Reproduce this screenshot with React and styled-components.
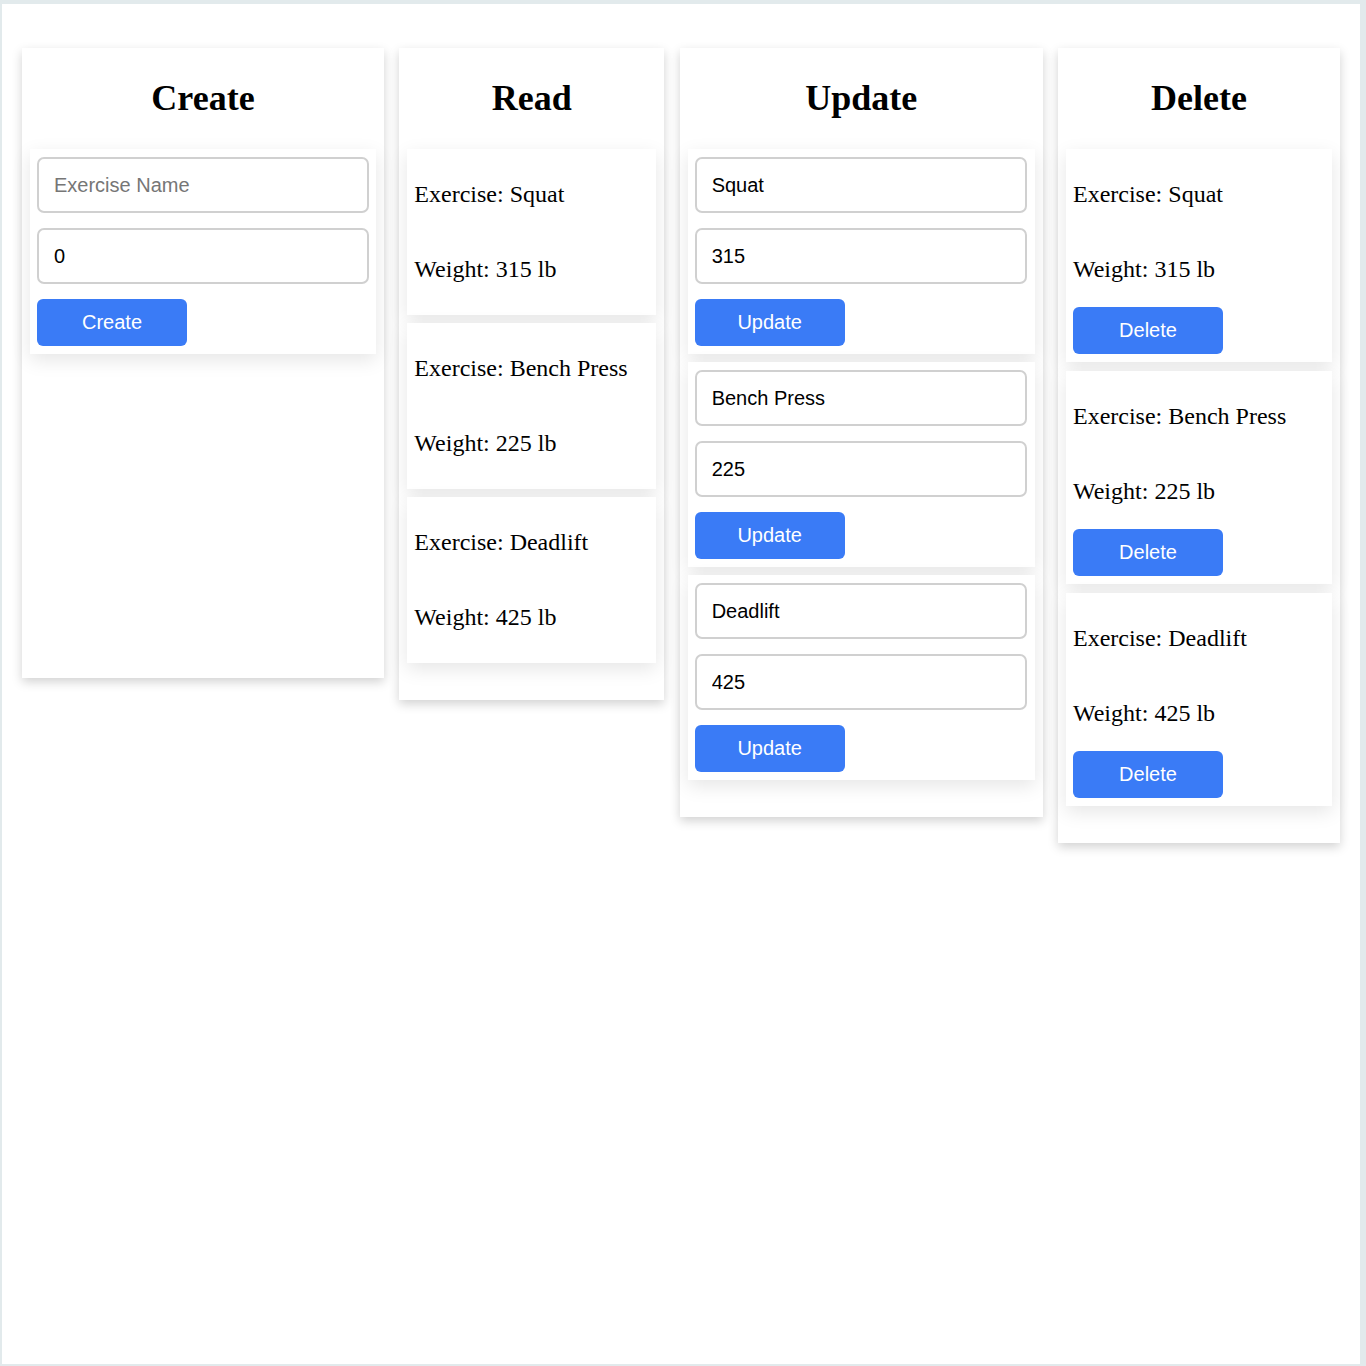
import React, { useState } from 'react';
import styled, { createGlobalStyle } from 'styled-components';

const GlobalStyle = createGlobalStyle`
    html, body {
        margin: 0;
        padding: 0;
        background: #e2eaec;
    }
    * { box-sizing: border-box; }
`

const initialExercises = [
    { id: 1, name: 'Squat', weight: 315 },
    { id: 2, name: 'Bench Press', weight: 225 },
    { id: 3, name: 'Deadlift', weight: 425 },
]

const App = () => {
    const [exercises, setExercises] = useState(initialExercises)
    const [newName, setNewName] = useState('')
    const [newWeight, setNewWeight] = useState(0)
    const [drafts, setDrafts] = useState(initialExercises)

    const create = () => {
        if (!newName) return
        const item = { id: Date.now(), name: newName, weight: Number(newWeight) }
        setExercises([...exercises, item])
        setDrafts([...drafts, item])
        setNewName('')
        setNewWeight(0)
    }

    const updateDraft = (id, field, value) => {
        setDrafts(drafts.map(d => d.id === id ? { ...d, [field]: value } : d))
    }

    const update = (id) => {
        const draft = drafts.find(d => d.id === id)
        setExercises(exercises.map(e => e.id === id ? { ...draft, weight: Number(draft.weight) } : e))
    }

    const remove = (id) => {
        setExercises(exercises.filter(e => e.id !== id))
        setDrafts(drafts.filter(d => d.id !== id))
    }

    return (
        <Page>
            <GlobalStyle />
            <Board>
                <Column width={362} minHeight={630}>
                    <Title>Create</Title>
                    <Card>
                        <Input placeholder="Exercise Name" value={newName} onChange={e => setNewName(e.target.value)} />
                        <Input type="text" value={newWeight} onChange={e => setNewWeight(e.target.value)} />
                        <Button onClick={create}>Create</Button>
                    </Card>
                </Column>

                <Column width={265}>
                    <Title>Read</Title>
                    <List>
                        {exercises.map(e => (
                            <Card key={e.id}>
                                <Line>Exercise: {e.name}</Line>
                                <Line>Weight: {e.weight} lb</Line>
                            </Card>
                        ))}
                    </List>
                </Column>

                <Column width={363}>
                    <Title>Update</Title>
                    <List>
                        {drafts.map(d => (
                            <Card key={d.id}>
                                <Input value={d.name} onChange={e => updateDraft(d.id, 'name', e.target.value)} />
                                <Input value={d.weight} onChange={e => updateDraft(d.id, 'weight', e.target.value)} />
                                <Button onClick={() => update(d.id)}>Update</Button>
                            </Card>
                        ))}
                    </List>
                </Column>

                <Column width={282}>
                    <Title>Delete</Title>
                    <List gap={9}>
                        {exercises.map(e => (
                            <Card key={e.id}>
                                <Line>Exercise: {e.name}</Line>
                                <Line>Weight: {e.weight} lb</Line>
                                <Button onClick={() => remove(e.id)}>Delete</Button>
                            </Card>
                        ))}
                    </List>
                </Column>
            </Board>
        </Page>
    );
}

const Page = styled.div`
    margin: 4px 6px 2px 2px;
    height: 1360px;
    background: #ffffff;
`

const Board = styled.div`
    display: flex;
    justify-content: space-between;
    align-items: flex-start;
    padding: 44px 20px 0 20px;
`

const Column = styled.div`
    width: ${p => p.width}px;
    min-height: ${p => p.minHeight ? `${p.minHeight}px` : 'auto'};
    padding: 0 8px 37px;
    background: #ffffff;
    box-shadow: 0 4px 10px rgba(0, 0, 0, 0.18);
`

const Title = styled.h1`
    margin: 0;
    height: 101px;
    padding-bottom: 2px;
    display: flex;
    align-items: center;
    justify-content: center;
    font-family: "Liberation Serif", "Times New Roman", serif;
    font-size: 36px;
    font-weight: bold;
    color: #000;
`

const List = styled.div`
    display: flex;
    flex-direction: column;
    gap: ${p => p.gap || 8}px;
`

const Card = styled.div`
    display: flex;
    flex-direction: column;
    align-items: flex-start;
    padding: 8px 8px 8px 7px;
    background: #ffffff;
    box-shadow: 0 6px 18px rgba(0, 0, 0, 0.1);
`

const Line = styled.p`
    margin: 25px 0 0;
    font-family: "Liberation Serif", "Times New Roman", serif;
    font-size: 24px;
    line-height: 25px;
    color: #000;

    & + & {
        margin-top: 50px;
        margin-bottom: 25px;
    }

    &:only-child, &:last-child {
        margin-bottom: 25px;
    }
`

const Input = styled.input`
    width: 332px;
    height: 56px;
    margin-bottom: 15px;
    padding: 0 15px;
    border: 2px solid #d0d0d0;
    border-radius: 7px;
    font-family: "Liberation Sans", Arial, sans-serif;
    font-size: 20px;
    color: #000;
    background: #fff;

    &::placeholder {
        color: #767676;
    }

    &:focus {
        outline: none;
        border-color: #3a7bf5;
    }
`

const Button = styled.button`
    width: 150px;
    height: 47px;
    border: none;
    border-radius: 6px;
    background: #3a7bf6;
    color: #ffffff;
    font-family: "Liberation Sans", Arial, sans-serif;
    font-size: 20px;
    cursor: pointer;
`

export default App;
